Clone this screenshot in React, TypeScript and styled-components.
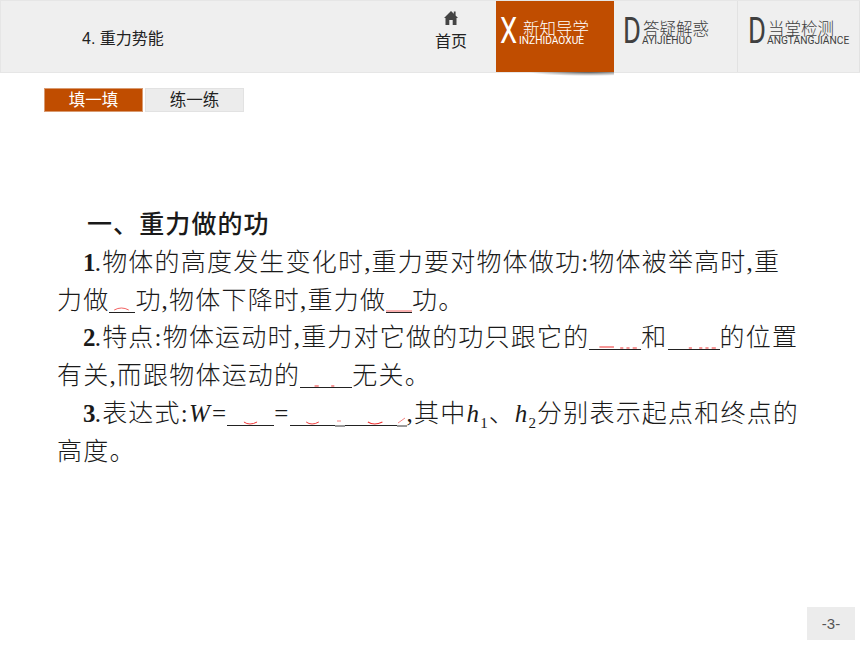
import styled, { createGlobalStyle } from "styled-components"

const CJK = `"Noto Sans CJK SC", sans-serif`
const UI = `"Liberation Sans", "Noto Sans CJK SC", sans-serif`
const BODY = `"Liberation Serif", "Noto Sans CJK SC", serif`

const GlobalStyle = createGlobalStyle`
    html, body {
        margin: 0;
        padding: 0;
        background: #fff;
    }
`

const HomeIcon = () => (
    <svg width="16" height="16" viewBox="0 0 16 16">
        <path d="M8 1 L1 8 L2.5 8 L2.5 15 L6.3 15 L6.3 10 L9.7 10 L9.7 15 L13.5 15 L13.5 8 L15 8 L12.6 5.6 L12.6 1.6 L10.8 1.6 L10.8 3.8 Z" fill="#444" />
    </svg>
)

// the red marks peeking out over the blanks in the slide
const Marks = ({ d }: { d: string }) => (
    <MarkSvg viewBox="0 0 50 8" preserveAspectRatio="none">
        <path d={d} fill="none" stroke="#ee3030" strokeWidth="1" />
    </MarkSvg>
)

const tabs = [
    { letter: "X", title: "新知导学", pinyin: "INZHIDAOXUE", active: true, width: 118, pad: 4, gap: 4 },
    { letter: "D", title: "答疑解惑", pinyin: "AYIJIEHUO", active: false, width: 124, pad: 9, gap: 1 },
    { letter: "D", title: "当堂检测", pinyin: "ANGTANGJIANCE", active: false, width: 122, pad: 10, gap: 1 },
]

export default function App() {
    return (
        <Page>
            <GlobalStyle />
            <Header>
                <LessonTitle>4. 重力势能</LessonTitle>
                <HomeLink>
                    <HomeIcon />
                    <HomeText>首页</HomeText>
                </HomeLink>
                {tabs.map((t) => (
                    <Tab key={t.title} $active={t.active} $width={t.width} $pad={t.pad}>
                        <TabLetter>{t.letter}</TabLetter>
                        <TabWords>
                            <TabTitle $gap={t.gap}>{t.title}</TabTitle>
                            <TabPinyin>{t.pinyin}</TabPinyin>
                        </TabWords>
                    </Tab>
                ))}
            </Header>
            <Switcher>
                <SwitchButton $active>填一填</SwitchButton>
                <SwitchButton>练一练</SwitchButton>
            </Switcher>
            <Content>
                <Heading>一、重力做的功</Heading>
                <Para>
                    <b>1</b>.物体的高度发生变化时,重力要对物体做功:物体被举高时,重力做
                    <Blank $w={26}><Marks d="M10 6 Q24 2 38 6" /></Blank>
                    功,物体下降时,重力做
                    <Blank $w={26}><Marks d="M0 7 L50 7" /></Blank>
                    功。
                </Para>
                <Para>
                    <b>2</b>.特点:物体运动时,重力对它做的功只跟它的
                    <Blank $w={52}><Marks d="M10 6 L24 6 M30 7 L33 7 M36 7 L39 7 M42 7 L46 7" /></Blank>
                    和
                    <Blank $w={52}><Marks d="M20 7 L23 7 M30 7 L33 7 M36 7 L39 7 M42 7 L46 7" /></Blank>
                    的位置有关,而跟物体运动的
                    <Blank $w={52}><Marks d="M14 7 L18 7 M30 7 L33 7" /></Blank>
                    无关。
                </Para>
                <Para>
                    <b>3</b>.表达式:<Var>W</Var>=
                    <Blank $w={47}><Marks d="M18 5 Q24 9 32 5" /></Blank>
                    =
                    <Blank $w={45}><Marks d="M18 5 Q24 9 32 5" /></Blank>
                    <Blank $w={10} $gray><Marks d="M10 4 L30 4" /></Blank>
                    <Blank $w={52}><Marks d="M22 5 Q28 9 36 5" /></Blank>
                    <Blank $w={10} $gray><Marks d="M5 6 L40 1" /></Blank>
                    ,其中<i>h</i><sub>1</sub>、<i>h</i><sub>2</sub>分别表示起点和终点的高度。
                </Para>
            </Content>
            <Footer>
                <PageNumber>-3-</PageNumber>
            </Footer>
        </Page>
    )
}

const Page = styled.div`
    display: flex;
    flex-direction: column;
    width: 860px;
    height: 645px;
    overflow: hidden;
    background: #fff;
`

const Header = styled.div`
    box-sizing: border-box;
    display: flex;
    align-items: stretch;
    height: 73px;
    background: #efefef;
    border: 1px solid #e6e6e6;
    border-right: none;
`

const LessonTitle = styled.div`
    flex: 1;
    padding: 28px 0 0 81px;
    font: 16px/20px ${UI};
    color: #222;
`

const HomeLink = styled.div`
    width: 70px;
    display: flex;
    flex-direction: column;
    align-items: center;
    padding-top: 9px;
    margin-right: 10px;
`

const HomeText = styled.div`
    margin-top: 4px;
    font: 16px/20px ${CJK};
    color: #222;
`

const Tab = styled.div<{ $active: boolean; $width: number; $pad: number }>`
    position: relative;
    box-sizing: border-box;
    width: ${(p) => p.$width}px;
    display: flex;
    padding: 12px 0 0 ${(p) => p.$pad}px;
    background: ${(p) => (p.$active ? "#c04d00" : "#efefef")};
    color: ${(p) => (p.$active ? "#fff" : "#404040")};
    border-right: ${(p) => (p.$active ? "none" : "1px solid #e2e2e2")};

    &::after {
        content: ${(p) => (p.$active ? '""' : "none")};
        position: absolute;
        left: 0;
        right: 0;
        top: 100%;
        height: 4px;
        background: radial-gradient(ellipse 50% 100% at 78% 0, rgba(0, 0, 0, 0.6), transparent);
    }
`

const TabLetter = styled.div`
    width: 19px;
    font: 36px/36px "Roboto", ${UI};
    transform: scaleX(0.76);
    transform-origin: left;
`

const TabWords = styled.div`
    display: flex;
    flex-direction: column;
    white-space: nowrap;
`

const TabTitle = styled.div<{ $gap: number }>`
    padding: 6px 0 0 ${(p) => p.$gap}px;
    font: 300 16.5px/18px ${CJK};
`

const TabPinyin = styled.div`
    margin-top: -2px;
    font: 400 10.2px/12px "Roboto", ${UI};
`

const Switcher = styled.div`
    display: flex;
    gap: 2px;
    margin: 15px 0 0 44px;
`

const SwitchButton = styled.div<{ $active?: boolean }>`
    box-sizing: border-box;
    width: 99px;
    height: 24px;
    text-align: center;
    font: 16.5px/21px ${CJK};
    background: ${(p) => (p.$active ? "#c04d00" : "#ececec")};
    color: ${(p) => (p.$active ? "#fff" : "#222")};
    border: 1px solid ${(p) => (p.$active ? "#d99a70" : "#e2e2e2")};
`

const Content = styled.div`
    width: 745px;
    margin: 92px 0 0 57px;
    font: 25px/37.8px ${BODY};
    color: #1a1a1a;
    letter-spacing: 1.2px;
`

const Heading = styled.div`
    margin-bottom: 2px;
    padding-left: 30px;
    font: 500 25px/37.8px ${CJK};
    letter-spacing: 1.1px;
`

const Para = styled.div`
    text-indent: 26px;
    font-weight: 300;

    b {
        font-weight: 700;
        margin-right: -2px;
    }

    sub {
        font-size: 15px;
        line-height: 0;
        letter-spacing: 1px;
    }
`

const Var = styled.i`
    margin-right: 1px;
`

const Blank = styled.span<{ $w: number; $gray?: boolean }>`
    display: inline-flex;
    align-items: flex-end;
    width: ${(p) => p.$w}px;
    height: 22px;
    vertical-align: -3px;
    text-indent: 0;
    border-bottom: ${(p) => (p.$gray ? "2px solid #999" : "1px solid #222")};
`

const MarkSvg = styled.svg`
    width: 100%;
    height: 8px;
`

const Footer = styled.div`
    display: flex;
    justify-content: flex-end;
    margin-top: auto;
    padding: 0 5px 5px 0;
`

const PageNumber = styled.div`
    width: 48px;
    height: 33px;
    text-align: center;
    background: #ececec;
    color: #555;
    font: 15px/33px ${UI};
`
